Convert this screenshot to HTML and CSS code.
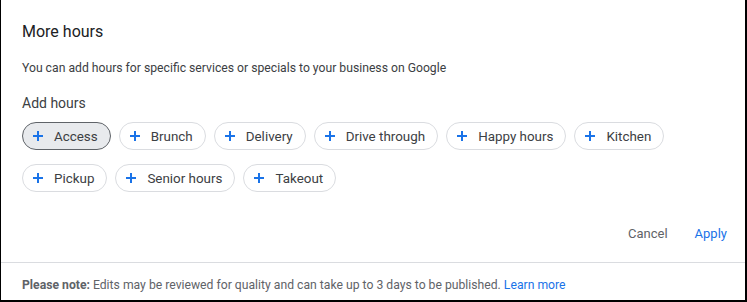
FILE: index.html
```html
<!DOCTYPE html>
<html lang="en">
<head>
    <meta charset="UTF-8">
    <meta name="viewport" content="width=device-width, initial-scale=1.0">
    <title>More hours</title>
    <link rel="stylesheet" href="styles.css">
</head>
<body>
    <div class="dialog">
        <div class="content">
            <h1>More hours</h1>
            <p class="desc">You can add hours for specific services or specials to your business on Google</p>
            <h2>Add hours</h2>
            <div class="chips">
                <button class="chip selected"><span class="plus"></span>Access</button>
                <button class="chip"><span class="plus"></span>Brunch</button>
                <button class="chip"><span class="plus"></span>Delivery</button>
                <button class="chip"><span class="plus"></span>Drive through</button>
                <button class="chip"><span class="plus"></span>Happy hours</button>
                <button class="chip"><span class="plus"></span>Kitchen</button>
                <button class="chip"><span class="plus"></span>Pickup</button>
                <button class="chip"><span class="plus"></span>Senior hours</button>
                <button class="chip"><span class="plus"></span>Takeout</button>
            </div>
            <div class="actions">
                <button class="btn cancel">Cancel</button>
                <button class="btn apply">Apply</button>
            </div>
        </div>
        <div class="footer">
            <b>Please note:</b> Edits may be reviewed for quality and can take up to 3 days to be published. <a href="#">Learn more</a>
        </div>
    </div>
</body>
</html>
```

FILE: styles.css
```css
body {
    margin: 0;
    font-family: Roboto, Arial, sans-serif;
    color: #202124;
}
.dialog {
    width: 747px;
    height: 302px;
    box-sizing: border-box;
    border-left: 1px solid #000;
    border-right: 2px solid #000;
    border-bottom: 2px solid #000;
    background: #fff;
    display: flex;
    flex-direction: column;
}
.content {
    padding: 20px 10px 0 21px;
}
h1 {
    margin: 0;
    font-size: 16px;
    font-weight: 400;
    line-height: 24px;
    color: #202124;
}
.desc {
    margin: 14px 0 0;
    font-size: 12.2px;
    line-height: 20px;
    color: #3c4043;
}
h2 {
    margin: 15px 0 0;
    font-size: 14px;
    font-weight: 400;
    line-height: 20px;
    color: #3c4043;
}
.chips {
    display: flex;
    flex-wrap: wrap;
    gap: 14px 8px;
    margin-top: 9px;
    width: 660px;
}
.chip {
    display: flex;
    align-items: center;
    height: 28px;
    box-sizing: border-box;
    padding: 0 12px 0 10px;
    border: 1px solid #dadce0;
    border-radius: 14px;
    background: #fff;
    font-family: Roboto, Arial, sans-serif;
    font-size: 13.4px;
    color: #3c4043;
    cursor: pointer;
}
.chip.selected {
    background: #e8eaed;
    border-color: #5f6368;
}
.plus {
    position: relative;
    width: 10px;
    height: 10px;
    margin-right: 11px;
}
.plus::before,
.plus::after {
    content: "";
    position: absolute;
    background: #1a73e8;
}
.plus::before {
    left: 0;
    top: 4px;
    width: 10px;
    height: 2px;
}
.plus::after {
    left: 4px;
    top: 0;
    width: 2px;
    height: 10px;
}
.actions {
    display: flex;
    justify-content: flex-end;
    gap: 11px;
    margin-top: 23px;
}
.btn {
    height: 36px;
    padding: 0 8px;
    border: none;
    background: none;
    font-family: Roboto, Arial, sans-serif;
    font-size: 13px;
    cursor: pointer;
}
.cancel {
    color: #5f6368;
}
.apply {
    color: #1a73e8;
}
.footer {
    margin-top: 11px;
    border-top: 1px solid #dadce0;
    padding: 12px 21px 0;
    font-size: 12.2px;
    line-height: 20px;
    color: #5f6368;
}
.footer a {
    color: #1a73e8;
    text-decoration: none;
}
```
